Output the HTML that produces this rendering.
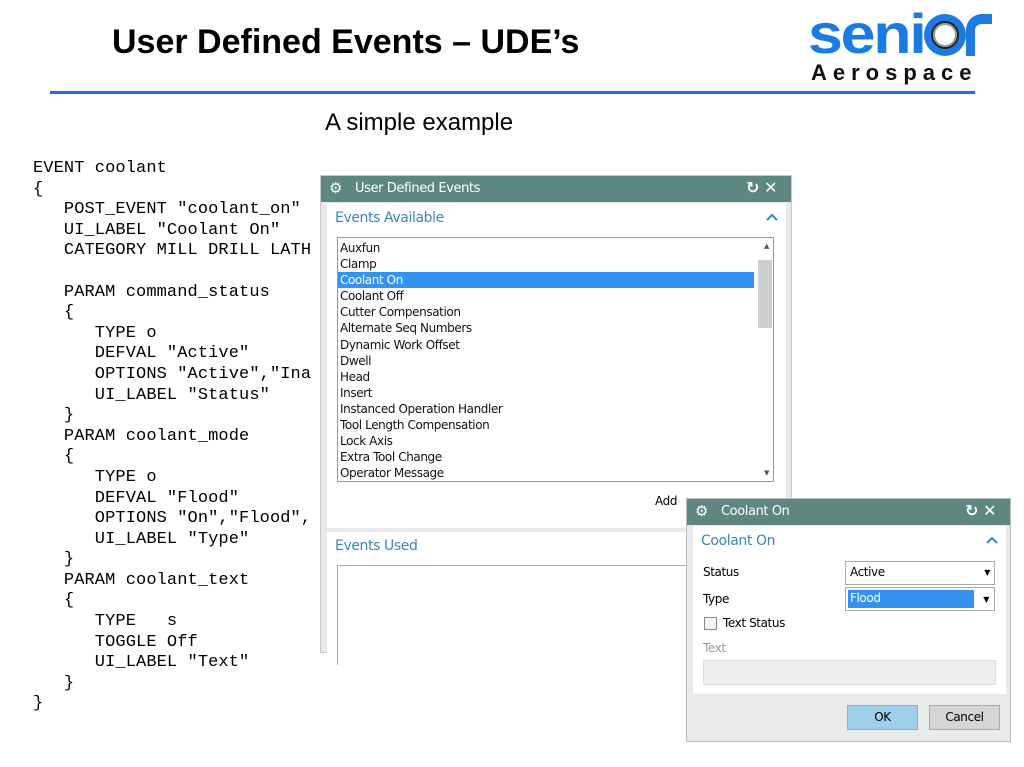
<!DOCTYPE html>
<html><head><style>
*{margin:0;padding:0;box-sizing:border-box}
body{width:1024px;height:767px;background:#fff;position:relative;overflow:hidden;font-family:"Liberation Sans",sans-serif}
.abs{position:absolute}
.code{left:33px;top:159px;font-family:"Liberation Mono",monospace;font-size:17px;line-height:20.6px;white-space:pre;color:#000;letter-spacing:0.1px}
.ui{font-family:"DejaVu Sans","Liberation Sans",sans-serif;font-size:12px;letter-spacing:-0.4px}
.tb{background:#5d8780;color:#fff}
.li{height:16.1px;line-height:16px;padding-left:2px;color:#111}
</style></head><body>
<div class="abs" style="left:112px;top:23px;font-size:34px;font-weight:bold;color:#000">User Defined Events – UDE’s</div>
<div class="abs" style="left:50px;top:91px;width:925px;height:3px;background:#1f6fe0"></div>
<div class="abs" style="left:808px;top:4px;font-size:56px;font-weight:bold;color:#1c7be0;letter-spacing:-2px;line-height:60px;transform:scaleX(1.12);transform-origin:left">seni</div>
<div class="abs" style="left:924px;top:14px;width:42px;height:42px;border-radius:50%;background:#1c7be0"></div>
<div class="abs" style="left:931px;top:21px;width:28px;height:28px;border-radius:50%;background:#fff;border:2px solid #222;box-shadow:inset 0 0 0 2px #999"></div>
<div class="abs" style="left:966px;top:14px;width:26px;height:42px;border-left:9px solid #1c7be0;border-top:10px solid #1c7be0;border-top-left-radius:16px"></div>
<div class="abs" style="left:811px;top:60px;font-size:22px;font-weight:bold;color:#111;letter-spacing:6px">Aerospace</div>
<div class="abs" style="left:325px;top:109px;font-size:24px;color:#000">A simple example</div>
<div class="abs code">EVENT coolant
{
   POST_EVENT "coolant_on"
   UI_LABEL "Coolant On"
   CATEGORY MILL DRILL LATH

   PARAM command_status
   {
      TYPE o
      DEFVAL "Active"
      OPTIONS "Active","Ina
      UI_LABEL "Status"
   }
   PARAM coolant_mode
   {
      TYPE o
      DEFVAL "Flood"
      OPTIONS "On","Flood",
      UI_LABEL "Type"
   }
   PARAM coolant_text
   {
      TYPE   s
      TOGGLE Off
      UI_LABEL "Text"
   }
}</div>
<!-- big dialog -->
<div class="abs ui" style="left:320px;top:175px;width:472px;height:478px;background:#e8eaeb;border:1px solid #c8c8c8">
 <div class="tb" style="height:26px;position:relative"><span class="abs" style="left:8px;top:3px;font-size:15px">⚙</span><span class="abs" style="left:34px;top:5px;font-size:13px">User Defined Events</span><span class="abs" style="left:425px;top:2px;font-size:16px;font-weight:bold">↻ ✕</span></div>
 <div class="abs" style="left:6px;top:27px;width:459px;height:325px;background:#fff"></div>
 <div class="abs" style="left:14px;top:34px;color:#3b86b8;font-size:14px">Events Available</div>
 <svg class="abs" style="left:445px;top:37px" width="12" height="8"><path d="M1 7 L6 2 L11 7" stroke="#3b86b8" stroke-width="2" fill="none"/></svg>
 <div class="abs" style="left:16px;top:61px;width:437px;height:245px;border:1px solid #999;background:#fff;padding-top:2px">
  <div class="li">Auxfun</div><div class="li">Clamp</div><div class="li" style="background:#3393ef;color:#fff;width:416px">Coolant On</div><div class="li">Coolant Off</div><div class="li">Cutter Compensation</div><div class="li">Alternate Seq Numbers</div><div class="li">Dynamic Work Offset</div><div class="li">Dwell</div><div class="li">Head</div><div class="li">Insert</div><div class="li">Instanced Operation Handler</div><div class="li">Tool Length Compensation</div><div class="li">Lock Axis</div><div class="li">Extra Tool Change</div><div class="li">Operator Message</div>
  <div class="abs" style="right:1px;top:22px;width:14px;height:68px;background:#cfcfcf"></div>
  <div class="abs" style="right:4px;top:4px;font-size:7px;color:#555">▲</div>
  <div class="abs" style="right:4px;bottom:4px;font-size:7px;color:#555">▼</div>
 </div>
 <div class="abs" style="left:334px;top:318px;font-size:12px">Add</div>
 <div class="abs" style="left:6px;top:356px;width:459px;height:130px;background:#fff"></div>
 <div class="abs" style="left:14px;top:362px;color:#3b86b8;font-size:14px">Events Used</div>
 <div class="abs" style="left:16px;top:389px;width:440px;height:100px;border:1px solid #aaa;border-bottom:none;background:#fff"></div>
</div>
<!-- small dialog -->
<div class="abs ui" style="left:686px;top:498px;width:325px;height:244px;background:#e8eaeb;border:1px solid #bbb">
 <div class="tb" style="height:26px;position:relative"><span class="abs" style="left:8px;top:3px;font-size:15px">⚙</span><span class="abs" style="left:34px;top:5px;font-size:13px">Coolant On</span><span class="abs" style="left:278px;top:2px;font-size:16px;font-weight:bold">↻ ✕</span></div>
 <div class="abs" style="left:6px;top:27px;width:313px;height:168px;background:#fff"></div>
 <div class="abs" style="left:14px;top:34px;color:#3b86b8;font-size:14px">Coolant On</div>
 <svg class="abs" style="left:299px;top:37px" width="12" height="8"><path d="M1 7 L6 2 L11 7" stroke="#3b86b8" stroke-width="2" fill="none"/></svg>
 <div class="abs" style="left:16px;top:66px">Status</div>
 <div class="abs" style="left:158px;top:62px;width:150px;height:24px;border:1px solid #aaa;padding:3px 4px">Active<span style="float:right;font-size:8px;margin-top:3px">▼</span></div>
 <div class="abs" style="left:16px;top:93px">Type</div>
 <div class="abs" style="left:158px;top:88px;width:150px;height:24px;border:1px solid #aaa;padding:2px"><div style="background:#3393ef;color:#fff;width:126px;height:18px;padding:1px 2px;display:inline-block">Flood</div><span style="float:right;font-size:8px;margin:5px 3px 0 0">▼</span></div>
 <div class="abs" style="left:17px;top:118px;width:13px;height:13px;border:1px solid #888;background:#f4f4f4"></div>
 <div class="abs" style="left:36px;top:117px">Text Status</div>
 <div class="abs" style="left:16px;top:142px;color:#999">Text</div>
 <div class="abs" style="left:16px;top:161px;width:293px;height:25px;background:#eee;border:1px solid #ddd"></div>
 <div class="abs" style="left:160px;top:206px;width:71px;height:25px;background:#9fd0ea;border:1px solid #7bb6d6;text-align:center;line-height:23px">OK</div>
 <div class="abs" style="left:242px;top:206px;width:71px;height:25px;background:#d5d5d5;border:1px solid #aaa;text-align:center;line-height:23px">Cancel</div>
</div>
</body></html>
